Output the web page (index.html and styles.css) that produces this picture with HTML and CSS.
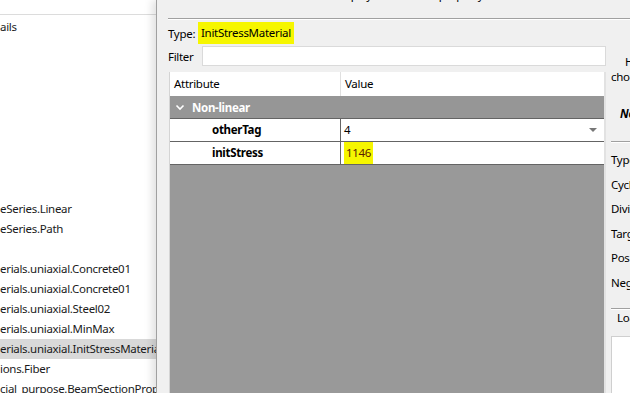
FILE: index.html
```html
<!DOCTYPE html>
<html lang="en">
<head>
  <meta charset="UTF-8" />
  <title>Properties</title>
  <link rel="stylesheet" href="styles.css">
</head>
<body>

  <div class="tree">
    <div class="tree-top"></div>
    <div class="tree-item first">ails</div>
    <div class="tree-list">
      <div class="tree-item">eSeries.Linear</div>
      <div class="tree-item">eSeries.Path</div>
      <div class="tree-item"></div>
      <div class="tree-item">erials.uniaxial.Concrete01</div>
      <div class="tree-item">erials.uniaxial.Concrete01</div>
      <div class="tree-item">erials.uniaxial.Steel02</div>
      <div class="tree-item">erials.uniaxial.MinMax</div>
      <div class="tree-item selected">erials.uniaxial.InitStressMaterial</div>
      <div class="tree-item">ions.Fiber</div>
      <div class="tree-item">cial_purpose.BeamSectionProperty</div>
    </div>
  </div>

  <div class="dialog">
    <div class="title"><span>Display and edit the property</span></div>
    <div class="dlg-body">
      <div class="main">
        <div class="type-row">
          <span class="lbl">Type:</span>
          <span class="mark">InitStressMaterial</span>
        </div>
        <div class="filter-row">
          <span class="lbl">Filter</span>
          <div class="input"></div>
        </div>
        <div class="grid">
          <div class="head">
            <div class="c1">Attribute</div>
            <div class="c2">Value</div>
          </div>
          <div class="group">
            <svg width="10" height="7" viewBox="0 0 10 7"><path d="M1.5 1.5 L5 5 L8.5 1.5" fill="none" stroke="#fff" stroke-width="1.6"/></svg>
            <span>Non-linear</span>
          </div>
          <div class="row">
            <div class="c1">otherTag</div>
            <div class="c2">4 <span class="arrow"></span></div>
          </div>
          <div class="row">
            <div class="c1">initStress</div>
            <div class="c2"><span class="mark val">1146</span></div>
          </div>
        </div>
      </div>
      <div class="side">
        <div class="hint"><span class="h1">H</span><br>choose</div>
        <div class="bi">Non-linear</div>
        <div class="sep"></div>
        <div class="fields">
          <div>Type</div>
          <div>Cycles</div>
          <div>Divisions</div>
          <div>Target</div>
          <div>Pos</div>
          <div>Neg</div>
        </div>
        <div class="sep last"></div>
        <div class="lo">Load</div>
        <div class="box"></div>
      </div>
    </div>
  </div>

</body>
</html>
```

FILE: styles.css
```css
body {
  margin: 0;
  width: 630px; height: 393px;
  overflow: hidden;
  position: relative;
  background: #fff;
  font-family: 'Noto Sans', sans-serif;
  font-size: 11.5px;
  letter-spacing: -0.3px;
  color: #000;
}
.tree {
  width: 170px;
  height: 393px;
  background: #fff;
}
.tree-top {
  height: 14px;
  border-bottom: 1px solid #dcdcdc;
}
.tree-item {
  height: 20px;
  line-height: 20px;
  white-space: nowrap;
  color: #1a1a1a;
}
.tree-item.first {
  margin-top: 2px;
}
.tree-list {
  margin-top: 162px;
}
.tree-item.selected {
  background: #d9d9d9;
}
.dialog {
  position: absolute;
  top: 0; left: 156px;
  width: 474px; height: 393px;
  box-sizing: border-box;
  background: #f0f0f0;
  border-left: 1px solid #a0a0a0;
  box-shadow: -4px 0 8px rgba(0,0,0,0.12);
  padding-left: 11px;
  overflow: hidden;
}
.title {
  height: 18px;
  text-align: center;
  padding-left: 20px;
  border-bottom: 1px solid #a0a0a0;
  box-shadow: 0 1px 0 #fff;
  overflow: hidden;
  white-space: nowrap;
}
.title span {
  display: block;
  margin-top: -13px;
  line-height: 16px;
}
.dlg-body {
  display: flex;
}
.main {
  width: 438px;
  flex: none;
}
.type-row {
  display: flex;
  align-items: center;
  height: 22px;
  margin-top: 3px;
}
.lbl {
  width: 30px;
}
.mark {
  background: #f6f600;
  padding: 0 3px;
  line-height: 22px;
}
.filter-row {
  display: flex;
  align-items: center;
  margin-top: 2px;
  height: 20px;
}
.filter-row .lbl {
  width: 34px;
}
.input {
  width: 402px;
  height: 18px;
  background: #fff;
  border: 1px solid #dadada;
}
.grid {
  margin-top: 6px;
  margin-left: 1px;
  height: 400px;
  background: #999;
  border-left: 1px solid #d4d4d4;
  border-right: 2px solid #e2e2e2;
}
.head {
  display: flex;
  height: 24px;
  line-height: 24px;
  background: #fff;
}
.c1 {
  width: 166px;
  padding-left: 4px;
  border-right: 1px solid #e0e0e0;
}
.c2 {
  flex: 1;
  padding-left: 4px;
  position: relative;
}
.group {
  height: 22px;
  display: flex;
  align-items: center;
  gap: 7px;
  padding-left: 5px;
  color: #fff;
  font-weight: bold;
  background: #969696;
  border-bottom: 1px solid #646464;
}
.row {
  display: flex;
  height: 22px;
  line-height: 22px;
  background: #fff;
  border-bottom: 1px solid #646464;
}
.row .c1 {
  font-weight: bold;
  padding-left: 42px;
  width: 128px;
  border-right: 1px solid #646464;
}
.row .c2 {
  padding-left: 3px;
}
.val {
  display: inline-block;
  padding: 0 2px;
  color: #5a2000;
}
.arrow {
  position: absolute;
  right: 7px; top: 9px;
  border-left: 4px solid transparent;
  border-right: 4px solid transparent;
  border-top: 4px solid #777;
}
.side {
  width: 200px;
  flex: none;
  padding-left: 5px;
}
.hint {
  margin-top: 35px;
  line-height: 15px;
}
.h1 {
  padding-left: 14px;
}
.bi {
  margin-top: 22px;
  line-height: 16px;
  font-weight: bold;
  font-style: italic;
  padding-left: 9px;
}
.sep {
  margin-top: 19px;
  height: 1px;
  background: #a0a0a0;
  box-shadow: 0 1px 0 #fff;
}
.fields {
  margin-top: 6px;
}
.fields div {
  height: 24.5px;
  line-height: 24.5px;
}
.sep.last {
  margin-top: 13px;
}
.lo {
  margin-top: 1px;
  padding-left: 6px;
  line-height: 16px;
}
.box {
  margin-top: 10px;
  height: 80px;
  background: #fff;
  border: 1px solid #cfcfcf;
}
```
